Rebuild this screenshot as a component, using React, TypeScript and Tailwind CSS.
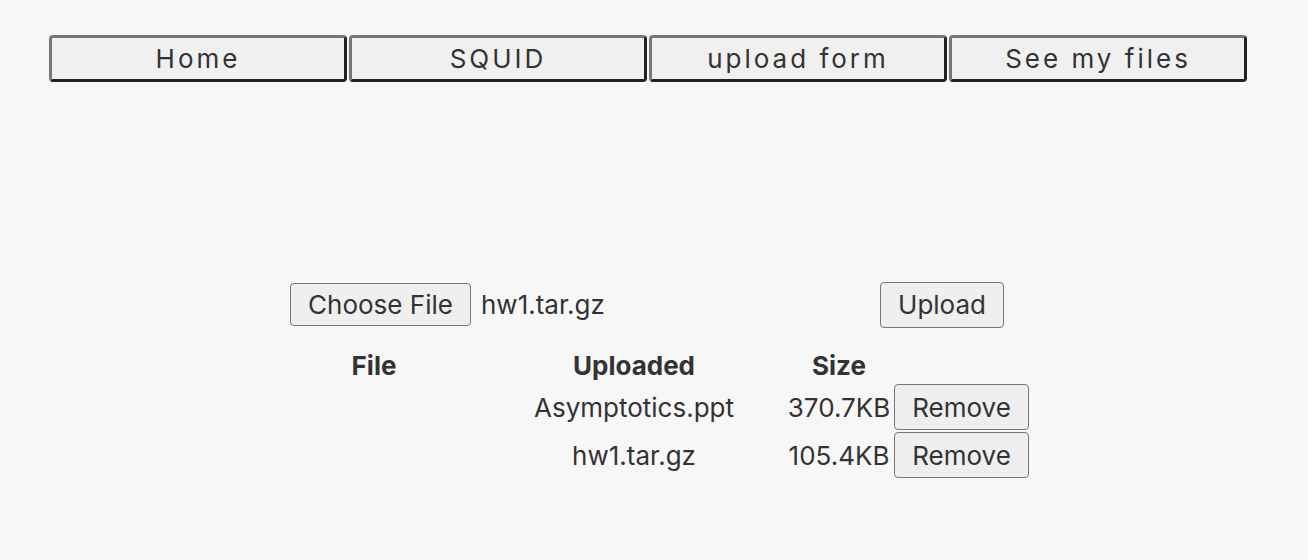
import React from "react";

const navBtn =
  "w-[298px] h-[47px] bg-[#f0f0f0] border-[3px] border-t-[#777] border-l-[#777] border-r-[#222] border-b-[#222] rounded-[4px] text-[26px] tracking-[3px] text-[#333] flex items-center justify-center";

const btn =
  "bg-[#efefef] border-[1.5px] border-[#777] rounded-[4px] text-[#333] flex items-center justify-center";

export default function App() {
  return (
    <div
      className="w-[1308px] h-[560px] bg-[#f7f7f7] overflow-hidden"
      style={{ fontFamily: "Inter, 'Noto Sans', sans-serif" }}
    >
      <div className="flex gap-[2px] pl-[49px] pt-[35px]">
        {["Home", "SQUID", "upload form", "See my files"].map((t) => (
          <div key={t} className={navBtn}>
            {t}
          </div>
        ))}
      </div>

      <div className="flex items-center mt-[199px] pl-[290px] h-[47px]">
        <div className={btn + " w-[181px] h-[43px] text-[26px] text-[#111]"}>Choose File</div>
        <div className="ml-[10px] text-[26px] text-[#333] w-[399px]">hw1.tar.gz</div>
        <div className={btn + " w-[124px] h-[46px] text-[26px]"}>Upload</div>
      </div>

      <div className="mt-[20px] pl-[226px] text-[26px] text-[#333]">
        <div className="flex items-center h-[35px] font-bold">
          <div className="w-[296px] text-center">File</div>
          <div className="w-[224px] text-center">Uploaded</div>
          <div className="w-[38px]" />
          <div className="w-[110px] text-center">Size</div>
        </div>
        <div className="flex items-center h-[48px]">
          <div className="w-[296px]" />
          <div className="w-[224px] text-center">Asymptotics.ppt</div>
          <div className="w-[38px]" />
          <div className="w-[110px] text-center">370.7KB</div>
          <div className={btn + " w-[135px] h-[46px] text-[26px]"}>Remove</div>
        </div>
        <div className="flex items-center h-[48px]">
          <div className="w-[296px]" />
          <div className="w-[224px] text-center">hw1.tar.gz</div>
          <div className="w-[38px]" />
          <div className="w-[110px] text-center">105.4KB</div>
          <div className={btn + " w-[135px] h-[46px] text-[26px]"}>Remove</div>
        </div>
      </div>
    </div>
  );
}
